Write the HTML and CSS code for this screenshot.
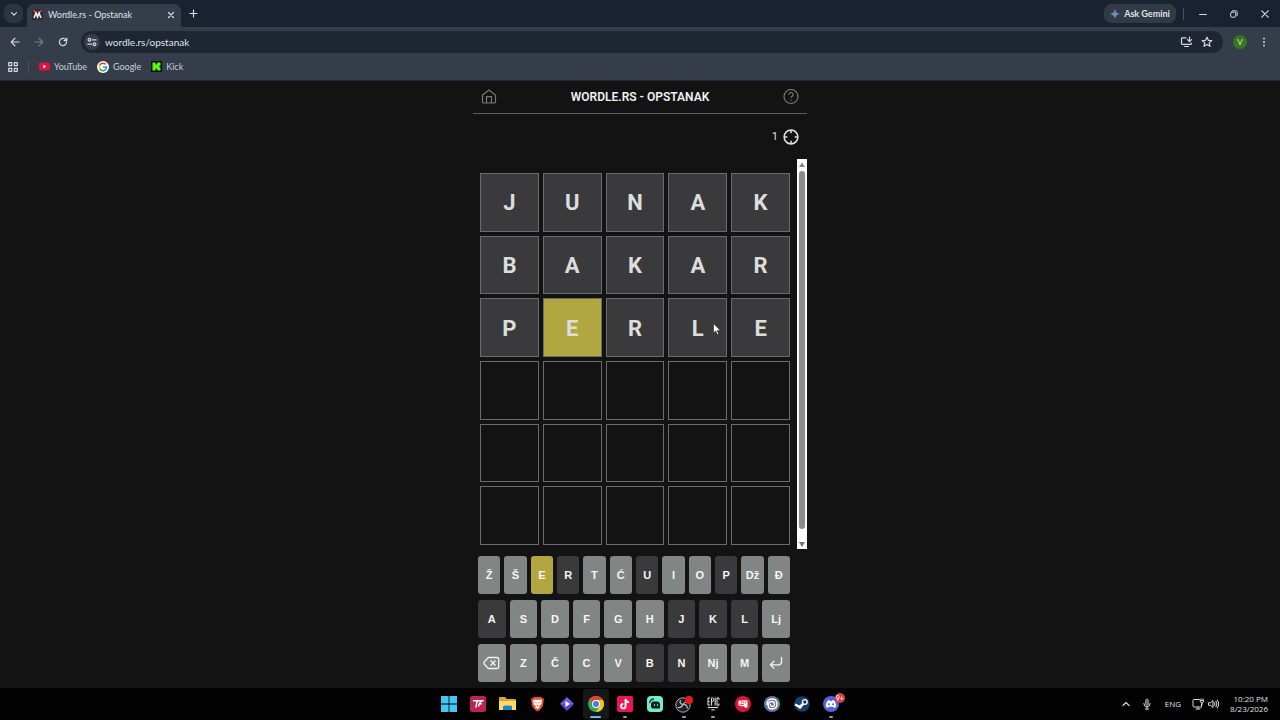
FILE: index.html
```html
<!DOCTYPE html>
<html lang="sr">
<head>
<meta charset="utf-8">
<title>Wordle.rs - Opstanak</title>
<link rel="stylesheet" href="styles.css">
</head>
<body>
<header class="browser">
  <div class="tabstrip">
    <button class="tab-search" aria-label="Search tabs"><svg width="8" height="8" viewBox="0 0 8 8"><path class="line" d="M1.500 2.700 4 5.200l2.500-2.500"/></svg></button>
    <div class="tab">
      <svg width="11" height="11" viewBox="0 0 11 11"><path fill="#30282d" d="M0 0h11v11H0z"/><path d="m1 1 4 4m5-4-4 4" stroke="#d84d55" stroke-width="1.300"/><path d="m2 9 2-5 1.500 4L7 4l2 5" fill="none" stroke="#eee" stroke-width="1.600"/></svg>
      <span class="tab-title">Wordle.rs - Opstanak</span>
      <button class="plain" aria-label="Close tab"><svg width="8" height="8" viewBox="0 0 8 8"><path class="line" d="m1.500 1.500 5 5m0-5-5 5"/></svg></button>
    </div>
    <button class="plain new-tab" aria-label="New tab"><svg width="9" height="9" viewBox="0 0 9 9"><path class="line" d="M4.500 1v7M1 4.500h7"/></svg></button>
    <div class="window-tools">
      <button class="gemini"><svg width="10" height="10" viewBox="0 0 10 10"><path fill="#4c93f7" d="M5 0q.7 4.300 5 5-4.300.7-5 5Q4.300 5.700 0 5 4.300 4.300 5 0"/><path fill="#e65b54" d="M5 0q.7 4.300 2 4.300L5 5 3.600 3.700Q4.700 3 5 0"/><path fill="#44b575" d="M0 5q3.500.4 4.500 3L5 5 3 4.300Q2 4.700 0 5"/></svg>Ask Gemini</button>
      <span class="divider"></span>
      <button class="plain win" aria-label="Minimize"><svg width="8" height="8" viewBox="0 0 8 8"><path class="thin" d="M.5 4.500h7"/></svg></button>
      <button class="plain win" aria-label="Restore"><svg width="8" height="8" viewBox="0 0 8 8"><rect class="thin" x=".7" y="2.200" width="5" height="5" rx="1"/><path class="thin" d="M2.500.8h3.200Q7.200.8 7.200 2.300v3.200"/></svg></button>
      <button class="plain win" aria-label="Close"><svg width="8" height="8" viewBox="0 0 8 8"><path class="line" d="m.8.8 6.400 6.400m0-6.400L.8 7.200"/></svg></button>
    </div>
  </div>
  <div class="toolbar">
    <button class="plain nav" aria-label="Back"><svg width="10" height="10" viewBox="0 0 10 10"><path class="line" d="M9 5H1.500M5 1.200 1.300 5 5 8.800"/></svg></button>
    <button class="plain nav dim" aria-label="Forward"><svg width="10" height="10" viewBox="0 0 10 10"><path class="line" d="M1 5h7.500M5 1.200 8.700 5 5 8.800"/></svg></button>
    <button class="plain nav" aria-label="Reload"><svg width="10" height="10" viewBox="0 0 10 10"><path class="line" d="M8.600 5A3.600 3.600 0 1 1 7.500 2.400L8.600 3.500M8.800 1v2.700H6.100"/></svg></button>
    <div class="omnibox">
      <button class="site-info" aria-label="Site information"><svg width="10" height="10" viewBox="0 0 10 10"><circle class="line" cx="2.500" cy="2.800" r="1.400"/><circle class="line" cx="7.500" cy="7.200" r="1.400"/><path class="line" d="M5.500 2.800h3.700M.8 7.200h3.700"/></svg></button>
      <input class="url" aria-label="Address" value="wordle.rs/opstanak">
      <button class="plain" aria-label="Install app"><svg width="13" height="12" viewBox="0 0 13 12"><path class="line" d="M6 1.800H2.300q-.8 0-.8.8v5q0 .8.8.8h8.400q.8 0 .8-.8V7M4.500 10.500h4M9.500 1v4.500M7.500 3.700l2 2 2-2"/></svg></button>
      <button class="plain" aria-label="Bookmark"><svg width="12" height="12" viewBox="0 0 12 12"><path class="line" d="m6 1.200 1.400 3.100 3.400.3-2.600 2.300.8 3.400-3-1.800-3 1.800.8-3.400L1.200 4.600l3.400-.3z"/></svg></button>
    </div>
    <button class="avatar" aria-label="Profile">V</button>
    <button class="plain menu" aria-label="Menu"><svg width="4" height="12" viewBox="0 0 4 12" fill="#c9ced6"><circle cx="2" cy="2.500" r="1"/><circle cx="2" cy="6" r="1"/><circle cx="2" cy="9.500" r="1"/></svg></button>
  </div>
  <nav class="bookmarks">
    <button class="plain" aria-label="Apps"><svg width="10" height="10" viewBox="0 0 10 10"><path class="line" d="M.7.7h3v3h-3zM6.300.7h3v3h-3zM.7 6.300h3v3h-3zM6.300 6.300h3v3h-3z"/></svg></button>
    <span class="divider"></span>
    <a class="bookmark" href="#"><svg width="11" height="11" viewBox="0 0 11 11"><rect y="1.500" width="11" height="8" rx="2" fill="#e3113c"/><path fill="#fff" d="m4.300 3.700 3 1.800-3 1.800z"/></svg>YouTube</a>
    <a class="bookmark" href="#"><svg width="12" height="12" viewBox="0 0 12 12"><circle cx="6" cy="6" r="6" fill="#fff"/><g fill="none" stroke-width="1.600"><path stroke="#ea4335" d="M2.700 4.300A3.600 3.600 0 0 1 8.600 3.400"/><path stroke="#fbbc05" d="M2.700 7.700a3.600 3.600 0 0 1 0-3.400"/><path stroke="#34a853" d="M8.500 8.600a3.600 3.600 0 0 1-5.800-.9"/><path stroke="#4285f4" d="M6 6h3.600Q9.600 7.600 8.500 8.600"/></g></svg>Google</a>
    <a class="bookmark" href="#"><svg width="11" height="11" viewBox="0 0 11 11"><path d="M0 0h11v11H0z" fill="#071006"/><path fill="#53fc18" d="M1.500 1.500h3v2h1v-1h1v-1h3v3h-1v2h1v3h-3v-1h-1v-1h-1v2h-3z"/></svg>Kick</a>
  </nav>
</header>

<main class="page">
  <div class="game">
    <div class="game-header">
      <button class="plain" aria-label="Home"><svg class="muted" width="16" height="16" viewBox="0 0 16 16"><path d="m1.500 6 6.500-5 6.500 5v6.700q0 1.300-1.300 1.300H2.800q-1.300 0-1.300-1.300zM5.500 13.800V7.700h5v6.100"/></svg></button>
      <h1>WORDLE.RS - OPSTANAK</h1>
      <button class="plain" aria-label="Help"><svg class="muted" width="16" height="16" viewBox="0 0 16 16"><circle cx="8" cy="7.500" r="7"/><path d="M5.900 5.700a2.100 2.100 0 1 1 3.200 1.700Q8 8 8 8.800M8 10.500v1.200"/></svg></button>
    </div>
    <div class="score"><span>1</span><svg class="target" width="16" height="16" viewBox="0 0 16 16"><circle cx="8" cy="8" r="6.900"/><path d="M8 1v3.300M8 11.700V15M1 8h3.300M11.700 8H15"/></svg></div>
    <div class="board-area">
      <div class="board">
        <div class="tile absent">J</div><div class="tile absent">U</div><div class="tile absent">N</div><div class="tile absent">A</div><div class="tile absent">K</div>
        <div class="tile absent">B</div><div class="tile absent">A</div><div class="tile absent">K</div><div class="tile absent">A</div><div class="tile absent">R</div>
        <div class="tile absent">P</div><div class="tile present">E</div><div class="tile absent">R</div><div class="tile absent">L</div><div class="tile absent">E</div>
        <div class="tile"></div><div class="tile"></div><div class="tile"></div><div class="tile"></div><div class="tile"></div>
        <div class="tile"></div><div class="tile"></div><div class="tile"></div><div class="tile"></div><div class="tile"></div>
        <div class="tile"></div><div class="tile"></div><div class="tile"></div><div class="tile"></div><div class="tile"></div>
      </div>
      <div class="scrollbar"><svg width="10" height="12" viewBox="0 0 10 12"><path fill="#858585" d="m5 3.500 3 4.500H2z"/></svg><span class="thumb"></span><svg width="10" height="10" viewBox="0 0 10 10"><path fill="#777" d="M2 3h6L5 8z"/></svg></div>
    </div>
    <div class="keyboard">
      <div class="key-row"><button>Ž</button><button>Š</button><button class="present">E</button><button class="absent">R</button><button>T</button><button>Ć</button><button class="absent">U</button><button>I</button><button>O</button><button class="absent">P</button><button>Dž</button><button>Đ</button></div>
      <div class="key-row"><button class="absent">A</button><button>S</button><button>D</button><button>F</button><button>G</button><button>H</button><button class="absent">J</button><button class="absent">K</button><button class="absent">L</button><button>Lj</button></div>
      <div class="key-row"><button aria-label="Delete"><svg class="key-icon" width="17" height="14" viewBox="0 0 17 14"><path d="M5.300 1.500H14q1.700 0 1.700 1.700v7.600q0 1.700-1.700 1.700H5.300L1 7.800V6.200zM8 4.800l4.200 4.400m0-4.400L8 9.200"/></svg></button><button>Z</button><button>Č</button><button>C</button><button>V</button><button class="absent">B</button><button class="absent">N</button><button>Nj</button><button>M</button><button aria-label="Enter"><svg class="key-icon" width="14" height="14" viewBox="0 0 14 14"><path d="M12.500 1.500v4.300q0 3-3 3H1.500M5 5.200 1.500 8.800 5 12.400"/></svg></button></div>
    </div>
  </div>
  <svg class="pointer" width="8" height="12" viewBox="0 0 8 12"><path fill="#fff" stroke="#222" stroke-width=".6" d="M.5.500v9.600l2.200-2 1.500 3.500 1.500-.7-1.500-3.300h3.100z"/></svg>
</main>

<footer class="taskbar">
  <div class="apps">
    <button aria-label="Start"><svg width="16" height="16" viewBox="0 0 16 16"><path fill="#48c5f4" d="M0 0h7.600v7.600H0zM8.400 0H16v7.600H8.400zM0 8.400h7.600V16H0zM8.400 8.400H16V16H8.400z"/></svg></button>
    <button aria-label="TF"><svg width="16" height="16" viewBox="0 0 16 16"><rect width="16" height="16" rx="2.500" fill="#bb2459"/><path d="M3 4.800h10.500M7.300 4.800 5.800 11.500M12.500 4.800Q10.300 5 9.500 7.500L8.500 10.500M9.300 7.800h2.500" fill="none" stroke="#fff" stroke-width="1.500"/></svg></button>
    <button aria-label="Files"><svg width="17" height="16" viewBox="0 0 17 16"><path fill="#dba52d" d="M0 2q0-1 1-1h5l2 2h8q1 0 1 1v10H0z"/><path fill="#ffda67" d="M0 5h17v9H0z"/><path fill="#2387c7" d="M4 14v-3q0-1.500 1.500-1.500h6q1.500 0 1.500 1.500v3z"/></svg></button>
    <button aria-label="Brave"><svg width="15" height="16" viewBox="0 0 15 16"><path fill="#ef4c2b" d="M4 1h7l3 2-.5 3q.3 6-6 9.500Q1.200 12 1.500 6L1 3z"/><path fill="#fff" d="m3 4 3-.5L7.500 4 9 3.500l3 .5-.8 4.500L9 10l1 1.300L7.500 13 5 11.300 6 10 3.800 8.500z"/><path fill="#ef4c2b" d="m4.500 5.500 2 .7v1.500zM10.500 5.500l-2 .7v1.500zM6.500 9h2L7.500 11z"/></svg></button>
    <button aria-label="Player"><svg width="16" height="16" viewBox="0 0 16 16"><rect x="3" y="3" width="10" height="10" rx="1" transform="rotate(45 8 8)" fill="#5946d8"/><path fill="#7a5be6" d="M8 1.200 14.800 8H1.200z"/><path fill="#fff" d="m6.500 5 4.500 3-4.500 3z"/></svg></button>
    <button class="active" aria-label="Chrome"><svg width="16" height="16" viewBox="0 0 16 16"><circle cx="8" cy="8" r="8" fill="#36a64f"/><path fill="#e84234" d="M8 8 1.100 4A8 8 0 0 1 14.900 4z"/><path fill="#fbc116" d="M8 8V4h6.900A8 8 0 0 1 8 16l3.500-6z"/><circle cx="8" cy="8" r="4" fill="#fff"/><circle cx="8" cy="8" r="3" fill="#3982ee"/></svg></button>
    <button class="open" aria-label="TikTok"><svg width="16" height="16" viewBox="0 0 16 16"><rect width="16" height="16" rx="2" fill="#ed1553"/><path d="M8.500 3v7.200a2.200 2.200 0 1 1-2.200-2.200M8.500 3q.4 3 3.500 3.200" fill="none" stroke="#fff" stroke-width="1.900"/></svg></button>
    <button aria-label="Streamlabs"><svg width="16" height="16" viewBox="0 0 16 16"><rect width="16" height="16" rx="4" fill="#72edcb"/><path fill="#111e22" d="M5.500 5.500H10q3 0 3 3v4H6q-2 0-2-2v-2Q4 6.500 5.500 5.500"/><path d="M2.800 7.200q0-4.200 4.200-4.200" fill="none" stroke="#1b3f42" stroke-width="1.300"/><path d="M7.500 8.200v1.700m3-1.700v1.700" stroke="#72edcb"/></svg></button>
    <button class="open" aria-label="OBS"><svg width="18" height="17" viewBox="0 0 18 17"><circle cx="8" cy="9" r="7.200" fill="#202024" stroke="#aaa"/><path d="M5.500 4Q4 8 8 8.500q4-.5 4.500 4M8 8.500q-1.500 4-5.300 2.800M8 8.500q1-3 5-2" fill="none" stroke="#bbb" stroke-width="1.200"/><circle cx="14" cy="4" r="4" fill="#f01818"/></svg></button>
    <button class="open" aria-label="Epic Games"><svg width="14" height="16" viewBox="0 0 14 16"><path fill="#151515" d="M1 0h12v13l-6 3-6-3z"/><path d="M4 2H2v7h2M2 5.500h1.600M5.500 9.500V2h1.200q1 0 1 1.700t-1 1.700H5.500M9.200 1.500v8M13 3.800V2h-2v7.200h2V7.500M2 11.500h10M5.500 13.800h3" fill="none" stroke="#ddd"/></svg></button>
    <button aria-label="Fist"><svg width="16" height="16" viewBox="0 0 16 16"><circle cx="8" cy="8" r="8" fill="#dd1739"/><path fill="#fff" d="m3.500 5 2-.8 1 .7 1.300-1 1.500.7 1.200-.6 2 .8v6.500l-2.500.4-1-1.500H6l-2.500-1z"/><path d="M6.200 5v2.500M8.300 5v2.500M10.300 5v2.500M4.500 8.500H9" stroke="#dd1739" stroke-width=".7"/></svg></button>
    <button aria-label="Ubisoft"><svg width="16" height="16" viewBox="0 0 16 16"><defs><linearGradient id="ubi"><stop stop-color="#3f8fbd"/><stop offset=".5" stop-color="#8a5c94"/><stop offset="1" stop-color="#45a37a"/></linearGradient></defs><circle cx="8" cy="8" r="8" fill="url(#ubi)"/><path d="M3 9Q2.500 3 8 3q5 0 5 5 0 5-5 5-3.800 0-3.800-3.700Q4.500 5.500 8 5.500q2.500.2 2.500 2.700T8 10.500Q6 10 6.500 8" fill="none" stroke="#fff" stroke-width="1.400"/></svg></button>
    <button aria-label="Steam"><svg width="16" height="16" viewBox="0 0 16 16"><circle cx="8" cy="8" r="7.800" fill="#173e6c"/><path d="m1 8.500 5 2.500 4.500-4.500" fill="none" stroke="#fff" stroke-width="2.500"/><circle cx="10.800" cy="6" r="2.400" fill="#173e6c" stroke="#fff" stroke-width="1.300"/><circle cx="6" cy="11" r="1.700" fill="#fff"/></svg></button>
    <button class="open" aria-label="Discord"><svg width="16" height="16" viewBox="0 0 16 16"><circle cx="8" cy="8" r="8" fill="#5865d8"/><path fill="#fff" d="m4.500 4.700 2-.6.500.8h2l.5-.8 2 .6q2 3.300 1.700 6l-2.200 1.200-.8-1.100H5.800L5 11.900l-2.200-1.200q-.3-2.700 1.700-6"/><circle cx="6" cy="8.200" r="1" fill="#5865d8"/><circle cx="10" cy="8.200" r="1" fill="#5865d8"/></svg><span class="badge">9+</span></button>
  </div>
  <div class="tray">
    <svg class="chevron" width="8" height="8" viewBox="0 0 8 8"><path class="line" d="m1 5.500 3-3 3 3"/></svg>
    <svg class="mic" width="8" height="12" viewBox="0 0 8 12"><rect x="2.500" y="1" width="3" height="6.300" rx="1.500" fill="#65717a" stroke="#9caab2" stroke-width=".7"/><path class="thin" d="M.8 5.500q0 3.300 3.200 3.300t3.200-3.300M4 9v2M2.500 11h3"/></svg>
    <span>ENG</span>
    <div class="sound">
      <svg width="12" height="12" viewBox="0 0 12 12"><path class="thin" d="M7.500 1.500H2q-1 0-1 1V8q0 1 1 1h7.500V6M4 11h4M6 9v2M9 .8v2m2-2v2M8.500 2.500h3V4L10 5 8.500 4zM10 5v2"/></svg>
      <svg width="11" height="10" viewBox="0 0 11 10"><path class="thin" d="M.8 3.700h1.700L5 1.500v7L2.500 6.300H.8zM6.500 3.500q1.200 1.500 0 3M8 2.200q2.200 2.800 0 5.600M9.300 1q3 4 0 8"/></svg>
    </div>
    <div class="clock"><time>10:20 PM</time><time>8/23/2026</time></div>
  </div>
</footer>
</body>
</html>
```
FILE: styles.css
```css
* { box-sizing: border-box; }
body {
  margin: 0;
  min-height: 100vh;
  display: flex;
  flex-direction: column;
  background: #131313;
  color: #dfe3e8;
  font: 9px/12px Lato, "Open Sans", sans-serif;
}
button, input { font: inherit; color: inherit; border: 0; padding: 0; margin: 0; background: none; }
button, a { display: flex; align-items: center; justify-content: center; }
svg { display: block; flex: none; }
.line, .thin { fill: none; stroke: #d5d9e0; stroke-width: 1.2; stroke-linecap: round; stroke-linejoin: round; }
.thin { stroke-width: 1; }
.divider { width: 1px; height: 12px; background: #465160; }

.browser { background: #353d4a; border-bottom: 1px solid #20272f; }
.tabstrip { height: 27px; display: flex; align-items: center; background: #192230; padding: 0 11px 0 4px; }
.tab-search { width: 19px; height: 19px; border-radius: 7px; background: #2b3441; }
.tab {
  width: 154px; height: 23px; margin-left: 4px; padding: 0 6px 2px 5px;
  align-self: flex-end; display: flex; align-items: center; gap: 5px;
  background: #353d4a; border-radius: 7px 7px 0 0;
}
.tab-title { flex: 1; white-space: nowrap; }
.new-tab { margin-left: 8px; }
.window-tools { margin-left: auto; display: flex; align-items: center; }
.gemini { width: 72px; height: 19px; gap: 4px; border-radius: 7px; background: #323a47; font-weight: 700; margin-right: 7px; }
.win { width: 8px; margin-left: 15px; }
.window-tools .win + .win { margin-left: 23px; }

.toolbar { height: 29px; display: flex; align-items: center; padding: 0 14px 0 10px; }
.nav { width: 10px; margin-right: 14px; }
.dim { opacity: .4; }
.omnibox { flex: 1; height: 22px; display: flex; align-items: center; gap: 8px; padding: 0 10px 0 3px; margin-right: 10px; border-radius: 11px; background: #1e2632; }
.nav + .omnibox { margin-left: -1px; }
.site-info { width: 16px; height: 16px; border-radius: 8px; background: #353d4a; }
.url { flex: 1; min-width: 0; height: 16px; margin-left: -3px; font-size: 10px; outline: 0; }
.avatar { width: 14px; height: 14px; border-radius: 7px; background: #39761b; font-size: 8px; margin-right: 15px; }
.bookmarks { height: 24px; display: flex; align-items: center; padding: 0 8px 3px; gap: 10px; }
.bookmark { color: #c9ced6; text-decoration: none; gap: 4px; }

.page { flex: 1; position: relative; }
.game { width: 334px; margin: 0 auto; display: flex; flex-direction: column; }
.game-header { height: 33px; display: flex; align-items: center; justify-content: space-between; padding: 0 8px; border-bottom: 1px solid #606060; }
h1 { margin: 0; font: 600 12px/16px Roboto, sans-serif; color: #f0f0f0; }
.muted { fill: none; stroke: #777; stroke-width: 1.2; }
.score { height: 45px; display: flex; align-items: center; justify-content: flex-end; gap: 5px; padding-right: 8px; font: 11px/16px Roboto, sans-serif; }
.target { fill: none; stroke: #e2e2e2; stroke-width: 1.5; }
.board-area { height: 390px; display: flex; justify-content: space-between; padding-left: 7px; }
.board { width: 310px; height: 372px; margin-top: 14px; display: grid; grid-template: repeat(6, 1fr) / repeat(5, 1fr); gap: 4px; }
.tile { display: flex; align-items: center; justify-content: center; padding-top: 2px; border: 1px solid #6b6b6b; font: bold 22px/24px Roboto, sans-serif; color: #dcdddd; }
.absent { background: #3a3a3c; }
.tile.present, .key-row .present { background: #b1a63f; }
.scrollbar { width: 10px; background: #fcfcfc; display: flex; flex-direction: column; align-items: center; }
.thumb { flex: 1; width: 6px; border-radius: 3px; background: #8b8b8b; margin-bottom: 10px; }
.keyboard { width: 312px; margin: 7px 0 6px 5px; display: flex; flex-direction: column; gap: 6px; }
.key-row { display: flex; gap: 4px; }
.key-row button { flex: 1 1 0; height: 38px; border-radius: 3px; background: #818584; color: #f6f6f6; font: bold 11px/14px "Liberation Sans", Arial, sans-serif; }
.key-row .absent { background: #3a3a3c; }
.key-icon { fill: none; stroke: #f4f4f4; stroke-width: 1.3; stroke-linecap: round; stroke-linejoin: round; }
.pointer { position: absolute; left: calc(50% + 73px); top: 242px; }

.taskbar { height: 32px; display: grid; grid-template-columns: 1fr auto 1fr; align-items: center; background: #020202; }
.apps { grid-column: 2; width: 408px; display: flex; justify-content: space-between; }
.apps button { width: 26px; height: 30px; border-radius: 3px; position: relative; }
.apps .active { background: #151719; }
.active::after, .open::after { content: ""; position: absolute; bottom: 1px; width: 4px; height: 2px; border-radius: 1px; background: #9b9b9b; }
.active::after { width: 11px; background: #65bee9; }
.badge { position: absolute; right: -1px; top: 4px; min-width: 10px; height: 10px; border-radius: 5px; background: #d84149; color: #fff; font-size: 7px; line-height: 10px; }
.tray { display: flex; align-items: center; justify-content: flex-end; gap: 11px; padding-right: 12px; font: 8px/12px "Open Sans", "Noto Sans", sans-serif; }
.chevron { margin-right: 2px; }
.mic { margin-right: 3px; }
.sound { display: flex; align-items: center; gap: 4px; }
.clock { display: flex; flex-direction: column; text-align: right; line-height: 10px; }
```
